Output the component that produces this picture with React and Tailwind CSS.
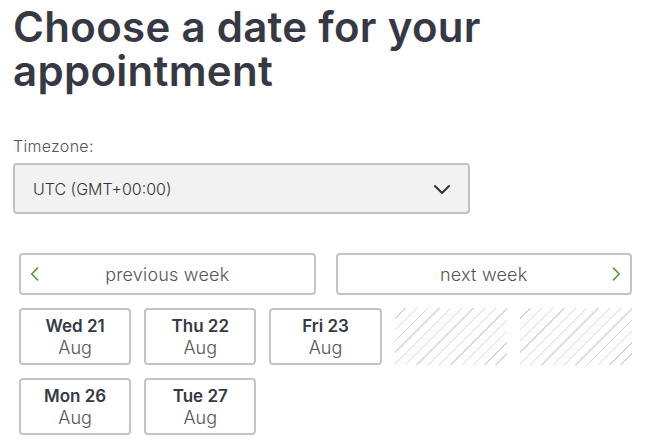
import React, { useState } from "react";

const days = [
  { label: "Wed 21", month: "Aug" },
  { label: "Thu 22", month: "Aug" },
  { label: "Fri 23", month: "Aug" },
  null,
  null,
  { label: "Mon 26", month: "Aug" },
  { label: "Tue 27", month: "Aug" },
];

const Chevron = ({ dir = "down", className = "" }) => {
  const d =
    dir === "left"
      ? "M15 5l-7 7 7 7"
      : dir === "right"
      ? "M9 5l7 7-7 7"
      : "M5 9l7 7 7-7";
  return (
    <svg viewBox="0 0 24 24" className={className} fill="none" stroke="currentColor" strokeWidth="2" strokeLinecap="round" strokeLinejoin="round">
      <path d={d} />
    </svg>
  );
};

const App = () => {
  const [selected, setSelected] = useState(null);

  return (
    <div className="min-h-screen bg-white px-[13px] pt-[5px] font-['Inter','Noto_Sans',sans-serif]">
      <h1 className="text-[42px] leading-[44px] font-semibold text-[#363944] tracking-[0.3px]">
        Choose a date for your
        <br />
        appointment
      </h1>

      <label className="block mt-[41px] text-[16px] font-light text-[#555] tracking-[0.3px]">
        Timezone:
      </label>
      <div className="mt-[5px] w-[457px] h-[51px] flex items-center justify-between pl-[18px] pr-[14px] bg-[#f2f2f2] border-2 border-[#c2c2c2] rounded-[4px]">
        <span className="text-[16px] font-light text-[#333]">UTC (GMT+00:00)</span>
        <Chevron className="w-[24px] h-[24px] text-[#333]" />
      </div>

      <div className="mx-[6px] mt-[39px] grid grid-cols-2 gap-[20px]">
        <button className="relative h-[42px] border-2 border-[#c4c4c4] rounded-[4px] text-[18px] font-light text-[#555] tracking-[0.2px]">
          <Chevron dir="left" className="absolute left-[4px] top-[9px] w-[20px] h-[20px] text-[#5b9a32]" />
          previous week
        </button>
        <button className="relative h-[42px] border-2 border-[#c4c4c4] rounded-[4px] text-[18px] font-light text-[#555] tracking-[0.2px]">
          next week
          <Chevron dir="right" className="absolute right-[4px] top-[9px] w-[20px] h-[20px] text-[#5b9a32]" />
        </button>
      </div>

      <div className="mx-[6px] mt-[13px] grid grid-cols-5 gap-[13px]">
        {days.map((day, i) =>
          day ? (
            <button
              key={i}
              onClick={() => setSelected(i)}
              className={`h-[57px] flex flex-col items-center justify-center border-2 rounded-[4px] ${
                selected === i ? "border-[#5b9a32]" : "border-[#c4c4c4]"
              }`}
            >
              <span className="text-[17px] leading-[22px] font-semibold text-[#363944]">{day.label}</span>
              <span className="text-[18px] leading-[22px] font-light text-[#555]">{day.month}</span>
            </button>
          ) : (
            <div
              key={i}
              className="h-[57px] bg-[repeating-linear-gradient(135deg,transparent_0,transparent_7px,#d6d6d6_7px,#d6d6d6_8px)]"
            />
          )
        )}
      </div>
    </div>
  );
};

export default App;
